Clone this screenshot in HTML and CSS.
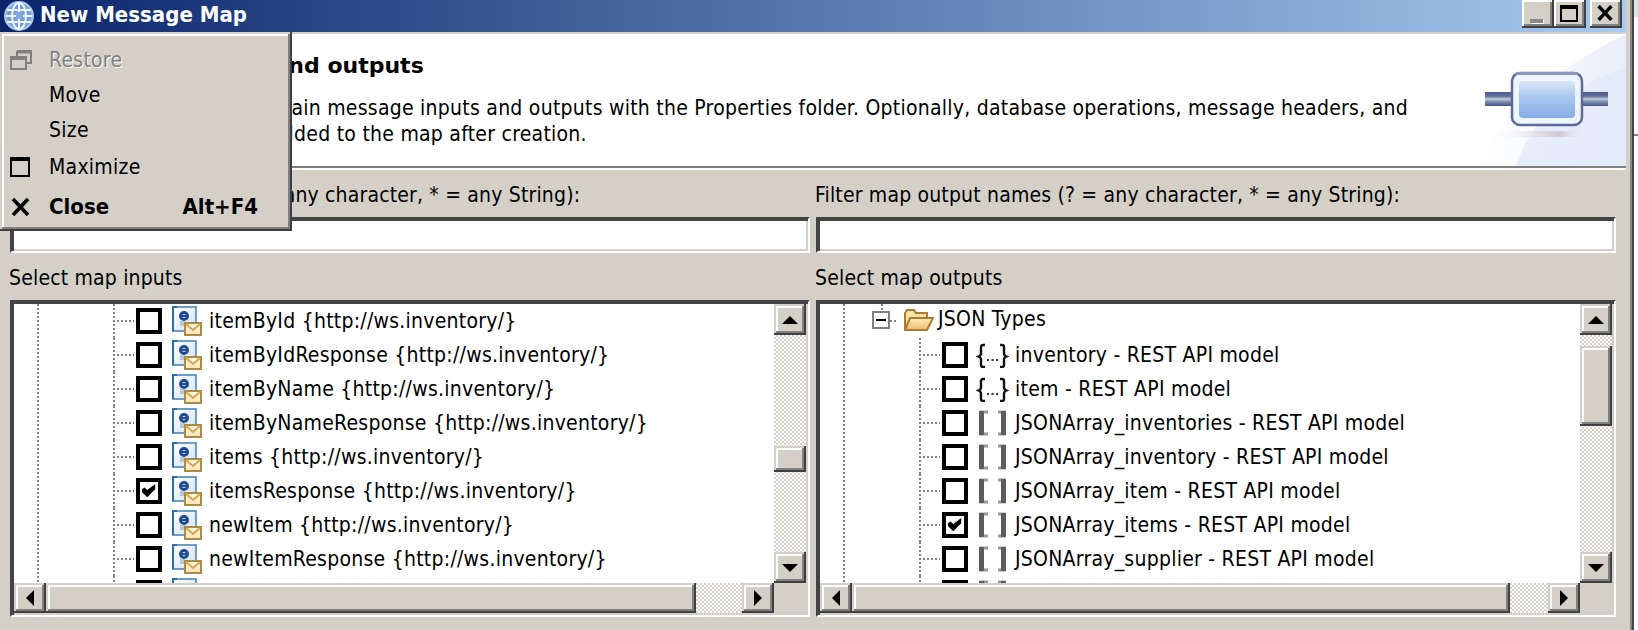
FILE: index.html
```html
<!DOCTYPE html>
<html lang="en">
<head>
<meta charset="utf-8">
<title>New Message Map</title>
<link rel="stylesheet" href="styles.css">
</head>
<body>
<svg class="defs" aria-hidden="true">
  <defs>
    <linearGradient id="pageg" x1="0" y1="0" x2="1" y2="1"><stop offset="0" stop-color="#ffffff"/><stop offset="1" stop-color="#cfe0f0"/></linearGradient>
    <linearGradient id="envg" x1="0" y1="0" x2="0" y2="1"><stop offset="0" stop-color="#fff8e6"/><stop offset="1" stop-color="#f6e3b8"/></linearGradient>
    <linearGradient id="foldg" x1="0" y1="0" x2="0" y2="1"><stop offset="0" stop-color="#fff0c4"/><stop offset="1" stop-color="#eeb868"/></linearGradient>
    <linearGradient id="bodyg" x1="0" y1="0" x2="0" y2="1"><stop offset="0" stop-color="#d8e6f8"/><stop offset=".45" stop-color="#a9c6ee"/><stop offset="1" stop-color="#86ade6"/></linearGradient>
    <linearGradient id="pipeg" x1="0" y1="0" x2="0" y2="1"><stop offset="0" stop-color="#4c5c8c"/><stop offset=".3" stop-color="#5f6e9a"/><stop offset=".5" stop-color="#c4ccd4"/><stop offset=".7" stop-color="#7c8aac"/><stop offset="1" stop-color="#46568a"/></linearGradient>
    <linearGradient id="sweepg" x1="0" y1="0" x2="1" y2="0"><stop offset="0" stop-color="#ffffff"/><stop offset="1" stop-color="#e2e8f8"/></linearGradient>
    <linearGradient id="shadowg" x1="0" y1="0" x2="1" y2="0"><stop offset="0" stop-color="#ffffff" stop-opacity="0"/><stop offset=".7" stop-color="#d0c6d4"/><stop offset="1" stop-color="#ffffff" stop-opacity="0"/></linearGradient>
    <radialGradient id="globeg" cx=".5" cy=".5" r=".55"><stop offset="0" stop-color="#7fa8e0"/><stop offset=".7" stop-color="#6d97d4"/><stop offset="1" stop-color="#b8d0ee"/></radialGradient>
    <symbol id="i-msg" viewBox="0 0 30 30">
      <rect x="1" y="1" width="23" height="24" fill="url(#pageg)" stroke="#6d9ccb" stroke-width="2"/>
      <path d="M1 25V1h4" fill="none" stroke="#2f6cab" stroke-width="2"/>
      <circle cx="12" cy="10" r="3.500" fill="none" stroke="#1e4c94" stroke-width="3"/>
      <path d="M9 10h6" stroke="#1e4c94" stroke-width="2"/>
      <path d="M8 15h5v5H8z" fill="#b9c7dd"/>
      <rect x="13" y="17" width="16" height="12" fill="url(#envg)" stroke="#a88c46" stroke-width="2"/>
      <path d="M14 18l7 6 7-6" fill="none" stroke="#dca64c" stroke-width="2"/>
    </symbol>
    <symbol id="i-obj" viewBox="0 0 33 26">
      <path d="M9 3H7Q5 3 5 5V11.500Q5 13.500 2.500 14.500Q5 15.500 5 17.500V23Q5 25 7 25H9" fill="none" stroke="#111" stroke-width="2.400"/>
      <path d="M24 3H26Q28 3 28 5V11.500Q28 13.500 30.500 14.500Q28 15.500 28 17.500V23Q28 25 26 25H24" fill="none" stroke="#111" stroke-width="2.400"/>
      <path d="M11 17h2v2h-2zM15.500 17h2v2h-2zM20 17h2v2h-2z" fill="#333"/>
    </symbol>
    <symbol id="i-arr" viewBox="0 0 33 26">
      <path d="M12 2H5v22h7" fill="none" stroke="#999" stroke-width="3"/>
      <path d="M5.500 1v24" stroke="#5c5c5c" stroke-width="5"/>
      <path d="M22 2h6v22h-6" fill="none" stroke="#999" stroke-width="3"/>
      <path d="M27.500 1v24" stroke="#5c5c5c" stroke-width="5"/>
    </symbol>
    <symbol id="i-check" viewBox="0 0 18 18">
      <path d="M1 7l3-2 3 3 9-7v6l-9 9-6-6z" fill="#000"/>
    </symbol>
  </defs>
</svg>

<div class="frame">
  <div class="window">
    <div class="titlebar">
      <svg class="globe" viewBox="0 0 30 30" aria-hidden="true">
        <circle cx="15" cy="15" r="14" fill="url(#globeg)" stroke="#a9c4ea" stroke-width="2"/>
        <ellipse cx="15" cy="15" rx="7" ry="13" fill="none" stroke="#eef4fc" stroke-width="2"/>
        <path d="M3 9h24M2 15h26M3 21h24M15 2v26" stroke="#eef4fc" stroke-width="2" fill="none"/>
        <rect x="12" y="11" width="7" height="7" fill="#86a9dc"/>
      </svg>
      <span class="title-text">New Message Map</span>
      <div class="winbtns">
        <button class="winbtn" type="button" aria-label="Minimize"><span class="min-bar"></span></button>
        <button class="winbtn" type="button" aria-label="Maximize"><span class="max-box"></span></button>
        <button class="winbtn winbtn-close" type="button" aria-label="Close">
          <svg class="glyph-x" viewBox="0 0 15 15" aria-hidden="true"><path d="M1.500 1l12 13M13.500 1l-12 13" stroke="#000" stroke-width="3.200"/></svg>
        </button>
      </div>
    </div>

    <div class="banner">
      <div class="banner-text">
        <h1 class="banner-title">Select map inputs and outputs</h1>
        <p class="banner-desc">Specify map source and obtain message inputs and outputs with the Properties folder. Optionally, database operations, message headers, and<br>global variables could be added to the map after creation.</p>
      </div>
      <svg class="banner-art" viewBox="0 0 160 132" aria-hidden="true">
        <path d="M160 0V132H14Q40 60 160 0Z" fill="url(#sweepg)" opacity=".75"/>
        <path d="M160 34V132H50Q74 60 160 34Z" fill="#dfe6f7" opacity=".65"/>
        <rect x="20" y="97" width="105" height="6" fill="url(#shadowg)"/>
        <rect x="19" y="58" width="123" height="14" fill="url(#pipeg)"/>
        <rect x="46" y="39" width="70" height="52" rx="8" fill="#edf4fd" stroke="#5c6c96" stroke-width="2.500"/>
        <rect x="50" y="38" width="62" height="3" fill="#8b97b8"/>
        <rect x="53" y="47" width="56" height="37" rx="4" fill="url(#bodyg)"/>
      </svg>
    </div>

    <div class="columns">
      <div class="col">
        <label class="lbl lbl-filter">Filter map input names (? = any character, * = any String):</label>
        <input class="field filter" type="text">
        <div class="lbl lbl-select">Select map inputs</div>
        <div class="field treebox">
          <div class="tree-row-wrap">
            <div class="tree tree-left">
              <div class="row"><span class="conn"></span><span class="cb"></span><svg class="ic"><use href="#i-msg"/></svg><span class="rt">itemById {http://ws.inventory/}</span></div>
              <div class="row"><span class="conn"></span><span class="cb"></span><svg class="ic"><use href="#i-msg"/></svg><span class="rt">itemByIdResponse {http://ws.inventory/}</span></div>
              <div class="row"><span class="conn"></span><span class="cb"></span><svg class="ic"><use href="#i-msg"/></svg><span class="rt">itemByName {http://ws.inventory/}</span></div>
              <div class="row"><span class="conn"></span><span class="cb"></span><svg class="ic"><use href="#i-msg"/></svg><span class="rt">itemByNameResponse {http://ws.inventory/}</span></div>
              <div class="row"><span class="conn"></span><span class="cb"></span><svg class="ic"><use href="#i-msg"/></svg><span class="rt">items {http://ws.inventory/}</span></div>
              <div class="row"><span class="conn"></span><span class="cb"><svg class="tick"><use href="#i-check"/></svg></span><svg class="ic"><use href="#i-msg"/></svg><span class="rt">itemsResponse {http://ws.inventory/}</span></div>
              <div class="row"><span class="conn"></span><span class="cb"></span><svg class="ic"><use href="#i-msg"/></svg><span class="rt">newItem {http://ws.inventory/}</span></div>
              <div class="row"><span class="conn"></span><span class="cb"></span><svg class="ic"><use href="#i-msg"/></svg><span class="rt">newItemResponse {http://ws.inventory/}</span></div>
              <div class="row"><span class="conn"></span><span class="cb"></span><svg class="ic"><use href="#i-msg"/></svg><span class="rt">updateItem {http://ws.inventory/}</span></div>
            </div>
            <div class="vbar">
              <button class="sb-btn" type="button" aria-label="Up"><span class="arr arr-up"></span></button>
              <div class="track"><span class="spacer spacer-l1"></span><span class="thumb thumb-l"></span><span class="spacer"></span></div>
              <button class="sb-btn" type="button" aria-label="Down"><span class="arr arr-down"></span></button>
            </div>
          </div>
          <div class="hbar">
            <button class="sb-btn sb-h" type="button" aria-label="Left"><span class="arr arr-left"></span></button>
            <div class="htrack"><span class="hthumb"></span><span class="spacer"></span></div>
            <button class="sb-btn sb-h" type="button" aria-label="Right"><span class="arr arr-right"></span></button>
            <span class="corner"></span>
          </div>
        </div>
      </div>

      <div class="col">
        <label class="lbl lbl-filter">Filter map output names (? = any character, * = any String):</label>
        <input class="field filter" type="text">
        <div class="lbl lbl-select">Select map outputs</div>
        <div class="field treebox">
          <div class="tree-row-wrap">
            <div class="tree tree-right">
              <div class="row row-folder">
                <span class="expander"><span class="minus"></span></span>
                <svg class="folder" viewBox="0 0 30 22" aria-hidden="true">
                  <path d="M1 20V4l2-3h7l2 3h11v5" fill="#fbe3a8" stroke="#b07a2e" stroke-width="2"/>
                  <path d="M1 21l5-12h23l-6 12z" fill="url(#foldg)" stroke="#b07a2e" stroke-width="2"/>
                </svg>
                <span class="rt rt-folder">JSON Types</span>
              </div>
              <div class="row"><span class="conn"></span><span class="cb"></span><svg class="ic2"><use href="#i-obj"/></svg><span class="rt">inventory - REST API model</span></div>
              <div class="row"><span class="conn"></span><span class="cb"></span><svg class="ic2"><use href="#i-obj"/></svg><span class="rt">item - REST API model</span></div>
              <div class="row"><span class="conn"></span><span class="cb"></span><svg class="ic2"><use href="#i-arr"/></svg><span class="rt">JSONArray_inventories - REST API model</span></div>
              <div class="row"><span class="conn"></span><span class="cb"></span><svg class="ic2"><use href="#i-arr"/></svg><span class="rt">JSONArray_inventory - REST API model</span></div>
              <div class="row"><span class="conn"></span><span class="cb"></span><svg class="ic2"><use href="#i-arr"/></svg><span class="rt">JSONArray_item - REST API model</span></div>
              <div class="row"><span class="conn"></span><span class="cb"><svg class="tick"><use href="#i-check"/></svg></span><svg class="ic2"><use href="#i-arr"/></svg><span class="rt">JSONArray_items - REST API model</span></div>
              <div class="row"><span class="conn"></span><span class="cb"></span><svg class="ic2"><use href="#i-arr"/></svg><span class="rt">JSONArray_supplier - REST API model</span></div>
              <div class="row"><span class="conn"></span><span class="cb"></span><svg class="ic2"><use href="#i-arr"/></svg><span class="rt">JSONArray_suppliers_list - REST API model</span></div>
            </div>
            <div class="vbar">
              <button class="sb-btn" type="button" aria-label="Up"><span class="arr arr-up"></span></button>
              <div class="track"><span class="spacer spacer-r1"></span><span class="thumb thumb-r"></span><span class="spacer"></span></div>
              <button class="sb-btn" type="button" aria-label="Down"><span class="arr arr-down"></span></button>
            </div>
          </div>
          <div class="hbar">
            <button class="sb-btn sb-h" type="button" aria-label="Left"><span class="arr arr-left"></span></button>
            <div class="htrack"><span class="hthumb hthumb-r"></span><span class="spacer"></span></div>
            <button class="sb-btn sb-h" type="button" aria-label="Right"><span class="arr arr-right"></span></button>
            <span class="corner"></span>
          </div>
        </div>
      </div>
    </div>

    <div class="sysmenu">
      <div class="mi mi-off"><svg class="mi-ic" viewBox="0 0 22 20" aria-hidden="true"><path d="M7 1h14v12h-4M7 1v5M7 2.500h14M1 7h15v12H1zM1 9h15" fill="none" stroke="#808080" stroke-width="2"/></svg><span>Restore</span></div>
      <div class="mi"><span class="mi-ic"></span><span>Move</span></div>
      <div class="mi"><span class="mi-ic"></span><span>Size</span></div>
      <div class="mi mi-max"><svg class="mi-ic" viewBox="0 0 22 20" aria-hidden="true"><path d="M1 1h18v18H1zM1 3h18" fill="none" stroke="#000" stroke-width="2"/></svg><span>Maximize</span></div>
      <div class="mi mi-close"><svg class="mi-ic" viewBox="0 0 22 20" aria-hidden="true"><path d="M3 2l15 16M18 2L3 18" stroke="#000" stroke-width="3.600"/></svg><span>Close</span><span class="shortcut">Alt+F4</span></div>
    </div>
  </div>
</div>
<div class="side"></div>
</body>
</html>
```

FILE: styles.css
```css
* { box-sizing: border-box; }
html, body { margin: 0; height: 630px; overflow: hidden; }
body {
  display: flex;
  width: 1638px;
  background: #fff;
  font-family: "DejaVu Sans", sans-serif;
  font-stretch: condensed;
  font-size: 21px;
  letter-spacing: .25px;
  color: #000;
}
.defs { width: 0; height: 0; position: absolute; }
.frame { width: 1634px; height: 630px; border-right: 2px solid #444; }
.window {
  position: relative;
  height: 630px;
  background: #d4d0c8;
  border-right: 2px solid #888;
  padding-right: 4px;
}
.side {
  width: 4px;
  height: 630px;
  background:
    linear-gradient(#d8e4f4, #d8e4f4) 0 0 / 100% 17px no-repeat,
    linear-gradient(#888, #888) 0 134px / 100% 2px no-repeat,
    #fff;
}

/* title bar */
.titlebar {
  height: 32px;
  display: flex;
  align-items: flex-start;
  background: linear-gradient(90deg, #0a246a, #a6caf0);
  padding-left: 4px;
}
.globe { width: 30px; height: 30px; margin-top: 1px; flex: none; }
.title-text {
  margin-left: 6px;
  color: #fff;
  font-weight: 700;
  font-size: 22px;
  letter-spacing: 0;
  line-height: 30px;
}
.winbtns { margin-left: auto; display: flex; padding-right: 4px; }
.winbtn {
  width: 32px;
  height: 28px;
  padding: 0;
  border: 0;
  background: #d4d0c8;
  box-shadow: inset -2px -2px #404040, inset 2px 2px #fff, inset -4px -4px #808080;
  position: relative;
  display: flex;
  align-items: center;
  justify-content: center;
}
.winbtn-close { margin-left: 4px; }
.min-bar { width: 13px; height: 4px; background: #888; box-shadow: 1px 1px #fff; margin-top: 13px; margin-left: -3px; }
.max-box { width: 18px; height: 17px; border: 2px solid #000; border-top-width: 4px; margin-top: -2px; margin-left: -2px; }
.glyph-x { width: 16px; height: 16px; margin-top: -3px; margin-left: -3px; }

/* banner: white panel, grey rule, white rule */
.banner {
  margin-top: 2px;
  height: 134px;
  background: #fff;
  border-bottom: 2px solid #808080;
  box-shadow: 0 2px #fff;
  margin-bottom: 2px;
  display: flex;
  justify-content: space-between;
}
.banner-text { padding: 17px 0 0 21px; white-space: nowrap; }
.banner-title { margin: 0 0 14px 21px; font-size: 22px; font-stretch: normal; line-height: 30px; font-weight: 700; letter-spacing: 0; }
.banner-desc { margin: 0; line-height: 26px; }
.banner-art { width: 160px; height: 132px; flex: none; }

/* columns */
.columns {
  display: grid;
  grid-template-columns: 800px 800px;
  column-gap: 6px;
  padding: 13px 10px 0;
}
.lbl { display: block; line-height: 24px; letter-spacing: .17px; margin-left: -1px; }
.lbl-filter { height: 24px; margin-bottom: 10px; }
.lbl-select { margin-top: 13px; margin-bottom: 10px; }

.field {
  border-style: solid;
  border-width: 2px;
  border-color: #444 #fff #fff #444;
  box-shadow: inset 2px 2px #444, inset -2px -2px #d4d0c8;
  background: #fff;
  display: block;
  width: 800px;
}
.filter { height: 36px; padding: 0; border-radius: 0; outline: 0; }
.treebox { height: 317px; padding: 2px; display: flex; flex-direction: column; background: #d4d0c8; }

.tree-row-wrap { display: flex; height: 279px; }
.tree {
  flex: 1;
  min-width: 0;
  overflow: hidden;
  background:
    repeating-linear-gradient(#808080 0 2px, transparent 2px 4px) 23px 0 / 2px 100% no-repeat,
    #fff;
}
.row { display: flex; align-items: center; height: 34px; padding-left: 99px; white-space: nowrap; }
.conn {
  width: 21px;
  height: 34px;
  margin-right: 2px;
  flex: none;
  background:
    repeating-linear-gradient(#808080 0 2px, transparent 2px 4px) 0 0 / 2px 100% no-repeat,
    repeating-linear-gradient(90deg, #808080 0 2px, transparent 2px 4px) 0 16px / 100% 2px no-repeat;
}
.cb {
  width: 26px;
  height: 26px;
  flex: none;
  border: 4px solid #000;
  background: #fff;
  display: flex;
  align-items: center;
  justify-content: center;
}
.tick { width: 16px; height: 16px; }
.ic { width: 30px; height: 30px; margin: 0 7px 0 10px; flex: none; }
.ic2 { width: 33px; height: 26px; margin: 0 6px 0 8px; flex: none; }
.rt { line-height: 32px; }

.row-folder { padding-left: 52px; }
.expander {
  width: 32px;
  height: 34px;
  flex: none;
  display: flex;
  align-items: center;
  background:
    repeating-linear-gradient(#808080 0 2px, transparent 2px 4px) 9px 0 / 2px 8px no-repeat,
    repeating-linear-gradient(90deg, #808080 0 2px, transparent 2px 4px) 18px 16px / 8px 2px no-repeat;
}
.minus {
  width: 18px;
  height: 18px;
  margin-top: -2px;
  border: 2px solid #808080;
  background: linear-gradient(#000, #000) center / 10px 2px no-repeat, #fff;
}
.folder { width: 30px; height: 22px; flex: none; margin-top: -2px; }
.rt-folder { margin-left: 4px; margin-top: -4px; }

/* scrollbars */
.vbar { width: 32px; flex: none; display: flex; flex-direction: column; }
.sb-btn {
  width: 32px;
  height: 31px;
  flex: none;
  padding: 0;
  border: 0;
  background: #d4d0c8;
  box-shadow: inset -2px -2px #404040, inset 2px 2px #d4d0c8, inset -4px -4px #808080, inset 4px 4px #fff;
  display: flex;
  align-items: center;
  justify-content: center;
}
.sb-h { height: 30px; }
.track, .htrack {
  flex: 1;
  display: flex;
  background: repeating-conic-gradient(#d4d0c8 0 25%, #fff 0 50%) 0 0 / 4px 4px;
}
.track { flex-direction: column; }
.spacer { flex: 1; display: block; }
.spacer-l1 { flex: none; height: 111px; }
.spacer-r1 { flex: none; height: 11px; }
.thumb, .hthumb {
  display: block;
  flex: none;
  background: #d4d0c8;
  box-shadow: inset -2px -2px #404040, inset 2px 2px #d4d0c8, inset -4px -4px #808080, inset 4px 4px #fff;
}
.thumb-l { height: 26px; }
.thumb-r { height: 80px; }
.hbar { display: flex; height: 30px; }
.hthumb { width: 650px; }
.hthumb-r { width: 658px; }
.corner { width: 32px; flex: none; }
.arr { width: 0; height: 0; display: block; border: 0 solid transparent; }
.arr-up { border-width: 0 8px 8px; border-bottom-color: #000; }
.arr-down { border-width: 8px 8px 0; border-top-color: #000; }
.arr-left { border-width: 8px 8px 8px 0; border-right-color: #000; }
.arr-right { border-width: 8px 0 8px 8px; border-left-color: #000; }

/* system menu */
.sysmenu {
  position: absolute;
  left: 0;
  top: 32px;
  width: 292px;
  height: 199px;
  padding: 10px 34px 0 10px;
  background: #d4d0c8;
  box-shadow: inset -2px -2px #404040, inset 2px 2px #d4d0c8, inset -4px -4px #808080, inset 4px 4px #fff;
}
.mi { display: flex; align-items: center; height: 35px; }
.mi-ic { width: 22px; height: 20px; margin-right: 17px; flex: none; }
.mi-off { color: #808080; text-shadow: 1px 1px #fff; }
.mi-max { margin-top: 2px; }
.mi-close { margin-top: 5px; font-weight: 700; font-size: 22px; letter-spacing: 0; }
.shortcut { margin-left: auto; }
```
